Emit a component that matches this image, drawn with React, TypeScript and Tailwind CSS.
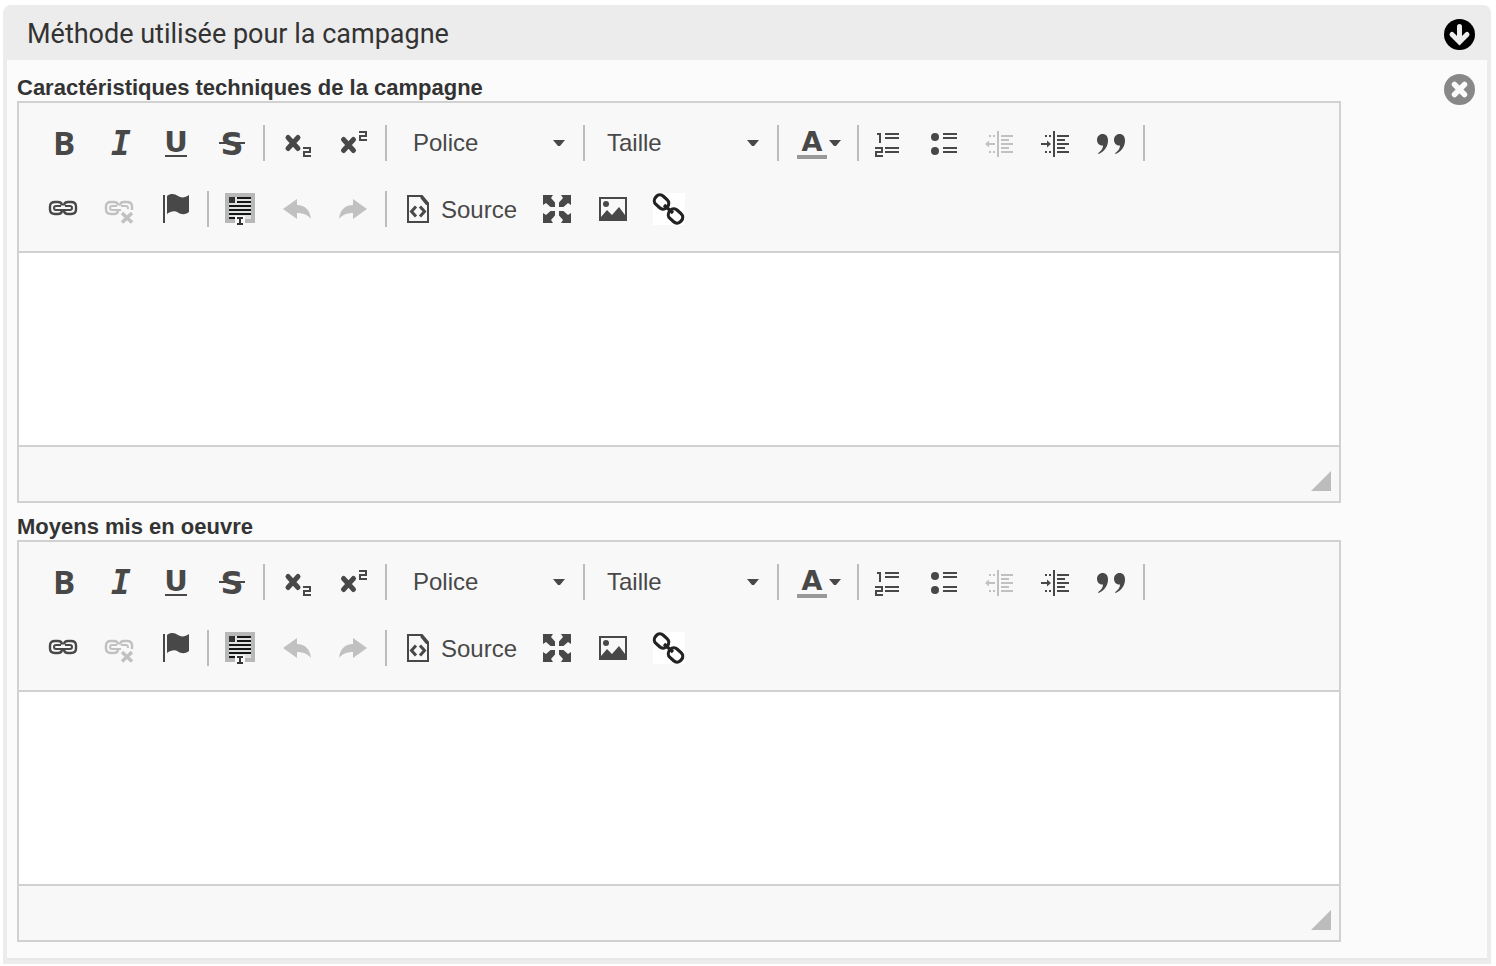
import React, { ReactNode } from "react";

const Icon = ({ children }: { children: ReactNode }) => (
  <svg viewBox="0 0 32 32" className="size-8 shrink-0 overflow-visible" fill="currentColor" aria-hidden="true">
    {children}
  </svg>
);

const Tool = ({ label, disabled, children }: { label: string; disabled?: boolean; children: ReactNode }) => (
  <button
    type="button"
    aria-label={label}
    title={label}
    disabled={disabled}
    className="flex h-12 w-14 items-center justify-center disabled:text-[#c1c1c1]"
  >
    <Icon>{children}</Icon>
  </button>
);

const Separator = () => <span className="ml-[3px] mr-[5px] h-9 w-[2px] bg-[#bcbcbc]" />;

const Arrow = () => (
  <svg viewBox="0 0 12 6" className="h-[6px] w-3" fill="currentColor" aria-hidden="true">
    <path d="M0 0h12L7 6H5z" />
  </svg>
);

const Combo = ({ label, options, className }: { label: string; options: string[]; className: string }) => (
  <div className="relative flex items-center">
    <select aria-label={label} defaultValue="" className={`h-12 appearance-none bg-transparent text-2xl ${className}`}>
      <option value="">{label}</option>
      {options.map((o) => (
        <option key={o}>{o}</option>
      ))}
    </select>
    <span className="pointer-events-none absolute inset-y-0 right-[15px] flex items-center">
      <Arrow />
    </span>
  </div>
);

const Two = ({ x, y }: { x: number; y: number }) => (
  <path transform={`translate(${x} ${y})`} d="M0 1h7v4H1v4h7" fill="none" stroke="currentColor" strokeWidth="2" />
);

const Lines = ({ x }: { x: number }) => (
  <path d={`M${x} 7h14M${x} 11h14M${x} 21h14M${x} 25h14`} stroke="currentColor" strokeWidth="2" />
);

const IndentLines = () => (
  <path
    d="M14 4v26M5 9h2M9 9h2M5 25h2M9 25h2M17 9h12M17 13h8M17 17h12M17 21h8M17 25h12"
    fill="none"
    stroke="currentColor"
    strokeWidth="2"
  />
);

const Toolbar = () => (
  <div className="flex flex-col gap-[18px] border-b-2 border-[#d1d1d1] bg-[#f8f8f8] px-[17px] pb-[18px] pt-4 text-[#484848]">
    <div className="flex items-center">
      <Tool label="Gras">
        <text x="5" y="28" className="font-['Open_Sans'] text-[33px] font-bold">B</text>
      </Tool>
      <Tool label="Italique">
        <text x="7" y="28" className="font-['DejaVu_Sans_Mono'] text-[33px] font-bold italic">I</text>
      </Tool>
      <Tool label="Souligné">
        <text x="16" y="25" textAnchor="middle" className="font-['DejaVu_Sans'] text-[29px] font-bold">U</text>
        <path d="M5 28h22v2H5z" />
      </Tool>
      <Tool label="Barré">
        <text x="16" y="28" textAnchor="middle" className="font-['DejaVu_Sans'] text-[32px] font-bold">S</text>
        <path d="M3 15h26v2H3z" />
      </Tool>
      <Separator />
      <Tool label="Indice">
        <path d="M6 10.500l10 11M16 10.500L6 21.500" stroke="currentColor" strokeWidth="5" strokeLinecap="round" />
        <Two x={21} y={20} />
      </Tool>
      <Tool label="Exposant">
        <path d="M5.500 12.500l10 11M15.500 12.500l-10 11" stroke="currentColor" strokeWidth="5" strokeLinecap="round" />
        <Two x={21} y={4} />
      </Tool>
      <Separator />
      <Combo label="Police" options={["Arial", "Georgia", "Verdana"]} className="w-[188px] pl-[21px]" />
      <Separator />
      <Combo label="Taille" options={["8", "12", "16", "24"]} className="w-[184px] pl-[17px]" />
      <Separator />
      <button type="button" aria-label="Couleur de texte" className="flex h-12 w-[70px] items-center gap-[1px] pl-3">
        <Icon>
          <text x="16" y="24" textAnchor="middle" className="font-['DejaVu_Sans'] text-[27px] font-bold">A</text>
          <path d="M1 28h30v4H1z" fill="#999" />
        </Icon>
        <Arrow />
      </button>
      <Separator />
      <div className="-ml-1 flex items-center">
        <Tool label="Liste numérotée">
          <path d="M5 7h3v9" fill="none" stroke="currentColor" strokeWidth="2" />
          <Two x={3} y={20} />
          <Lines x={13} />
        </Tool>
        <Tool label="Liste à puces">
          <circle cx="7" cy="10" r="4" />
          <circle cx="7" cy="24" r="4" />
          <Lines x={15} />
        </Tool>
        <Tool label="Diminuer le retrait" disabled>
          <IndentLines />
          <path d="M1 17l4-3.500V16h6v2H5v2.500z" />
        </Tool>
        <Tool label="Augmenter le retrait">
          <IndentLines />
          <path d="M11 17l-4-3.500V16H1v2h6v2.500z" />
        </Tool>
        <Tool label="Citation">
          <path d="M6.500 7C10 7 12 9.500 12 13.500c0 6-3.500 11-9.500 13.500l-.5-.8C5 24 7 21.500 7 18.500 3.500 19 1 16.500 1 12.800 1 9.500 3.500 7 6.500 7z" />
          <path d="M23.500 7c3.500 0 5.500 2.500 5.500 6.500 0 6-3.500 11-9.500 13.500l-.5-.8c3-2.200 5-4.700 5-7.700-3.500.5-6-2-6-5.700C18 9.500 20.500 7 23.500 7z" />
        </Tool>
      </div>
      <Separator />
    </div>

    <div className="flex items-center">
      <Tool label="Lien">
        <g fill="none" stroke="currentColor" strokeWidth="2.400">
          <path d="M14 12.500V12Q13.500 9 10 9H7Q2 9 2 13.500V16.500Q2 21 7 21H10Q13.500 21 14 18v-.5M16 12.500V12Q16.500 9 20 9H23Q28 9 28 13.500V16.500Q28 21 23 21H20Q16.500 21 16 18v-.5" />
          <path d="M13 13H8Q6 13 6 15T8 17H22Q24 17 24 15T22 13H17" strokeWidth="2" />
        </g>
      </Tool>
      <Tool label="Supprimer le lien" disabled>
        <g fill="none" stroke="currentColor" strokeWidth="2.400">
          <path d="M14 12.500V12Q13.500 9 10 9H7Q2 9 2 13.500V16.500Q2 21 7 21H10Q13.500 21 14 18v-.5M16 12.500V12Q16.500 9 20 9H23Q28 9 28 13.500V17" />
          <path d="M13 13H8Q6 13 6 15T8 17H17M17 13h5q2 0 2 3" strokeWidth="2" />
          <path d="M18 20l10 9.500M28 20l-10 9.500" strokeWidth="3.500" />
        </g>
      </Tool>
      <Tool label="Ancre">
        <path d="M3 2h2v28H3zM7 3c4-3 8-2 11 0s7 2 11-1v17c-4 3-8 2.500-11 .5s-7-1.500-11 1.500z" />
      </Tool>
      <Separator />
      <Tool label="Modèles">
        <path d="M-1 0h30v30H-1z" fill="#b8b8b8" />
        <path d="M3 4h22v22H3z" fill="#dfe3df" />
        <path d="M3 4h6v6H3z" fill="#333" />
        <path d="M11 5h14M11 9h14M3 13h22M3 17h22M3 21h22M3 25h6" stroke="#151515" strokeWidth="2" />
        <path d="M9 23h10v9H9z" fill="#f8f8f8" />
        <path d="M11 25h6M14 25v6M11 31h6" fill="none" stroke="#333" strokeWidth="2" />
      </Tool>
      <Tool label="Annuler" disabled>
        <path d="M1 16L15 6v6c8 0 13 5 14 14-3-4-8-6-14-6v6z" />
      </Tool>
      <Tool label="Rétablir" disabled>
        <path d="M29 16L15 6v6C7 12 2 17 1 26c3-4 8-6 14-6v6z" />
      </Tool>
      <Separator />
      <button type="button" className="flex h-12 w-[137px] items-center gap-[7px] pl-[10px] text-2xl">
        <Icon>
          <path d="M6 3h14l6 7v19H6zM19.500 3v2l5 6H26" fill="none" stroke="currentColor" strokeWidth="2" />
          <path d="M14 13.500L9.500 18.500l4.500 5M18 13.500l4.500 5-4.500 5" fill="none" stroke="currentColor" strokeWidth="3" />
        </Icon>
        <span className="pt-[2px]">Source</span>
      </button>
      <Tool label="Agrandir">
        {[0, 90, 180, 270].map((a) => (
          <path key={a} transform={`rotate(${a} 16 16)`} d="M2 2h10L10 5l4 4.500V14H9.500L5 10 2 12z" />
        ))}
      </Tool>
      <Tool label="Image">
        <path d="M3 5h26v22H3z" fill="none" stroke="currentColor" strokeWidth="2" />
        <circle cx="9" cy="11" r="3" />
        <path d="M4 26v-2l6-7 5 5 7-8 6 8v4z" />
      </Tool>
      <Tool label="Lien interne">
        <path d="M0 0h32v32H0z" fill="#fff" />
        <g fill="none" stroke="#222" strokeWidth="3.200">
          <rect x="-7.500" y="-5.500" width="15" height="11" rx="5" transform="translate(8.500 9) rotate(42)" />
          <rect x="-7.500" y="-5.500" width="15" height="11" rx="5" transform="translate(22.500 23) rotate(42)" />
          <path d="M11 12l9 8" />
        </g>
      </Tool>
    </div>
  </div>
);

const EditorField = ({ id, label }: { id: string; label: string }) => (
  <div>
    <label htmlFor={id} className="block text-[22px] font-bold leading-[27px] text-[#333]">
      {label}
    </label>
    <div className="border-2 border-[#d1d1d1]">
      <Toolbar />
      <textarea id={id} className="block h-48 w-full resize-none bg-white p-5 text-2xl outline-none" />
      <div className="flex h-14 items-end justify-end border-t-2 border-[#d1d1d1] bg-[#f8f8f8] pb-[10px] pr-2">
        <svg viewBox="0 0 20 20" className="size-5" aria-hidden="true">
          <path d="M20 0v20H0z" fill="#bcbcbc" />
        </svg>
      </div>
    </div>
  </div>
);

export default function App() {
  return (
    <main className="bg-white pb-[2px] pl-[3px] pr-[5px] pt-[5px] font-['Liberation_Sans',Arial,sans-serif]">
      <section className="rounded-t-lg bg-[#ececec] px-1 pb-1">
        <header className="flex h-[55px] items-center justify-between pl-5 pr-3">
          <h2 className="pt-[2px] font-['Roboto',sans-serif] text-[27px] leading-8 text-[#333]">Méthode utilisée pour la campagne</h2>
          <button type="button" aria-label="Replier" className="mt-1">
            <svg viewBox="0 0 31 31" className="size-[31px]" aria-hidden="true">
              <circle cx="15.500" cy="15.500" r="15.500" />
              <path d="M15.500 7.500v15M8 15.500l7.500 7.500 7.500-7.500" fill="none" stroke="#ececec" strokeWidth="5" strokeLinecap="round" />
            </svg>
          </button>
        </header>
        <div className="flex items-start border-b-2 border-[#e8e8e8] bg-[#fbfbfb] pb-4 pl-[10px] pr-3 pt-[14px]">
          <div className="flex min-w-0 flex-1 flex-col gap-[10px]">
            <EditorField id="caracteristiques" label="Caractéristiques techniques de la campagne" />
            <EditorField id="moyens" label="Moyens mis en oeuvre" />
          </div>
          <div className="flex w-[134px] justify-end">
            <button type="button" aria-label="Supprimer">
              <svg viewBox="0 0 31 31" className="size-[31px]" aria-hidden="true">
                <circle cx="15.500" cy="15.500" r="15.500" fill="#888" />
                <path d="M10.500 10.500l10 10M20.500 10.500l-10 10" stroke="#fbfbfb" strokeWidth="5.500" strokeLinecap="round" />
              </svg>
            </button>
          </div>
        </div>
      </section>
    </main>
  );
}
